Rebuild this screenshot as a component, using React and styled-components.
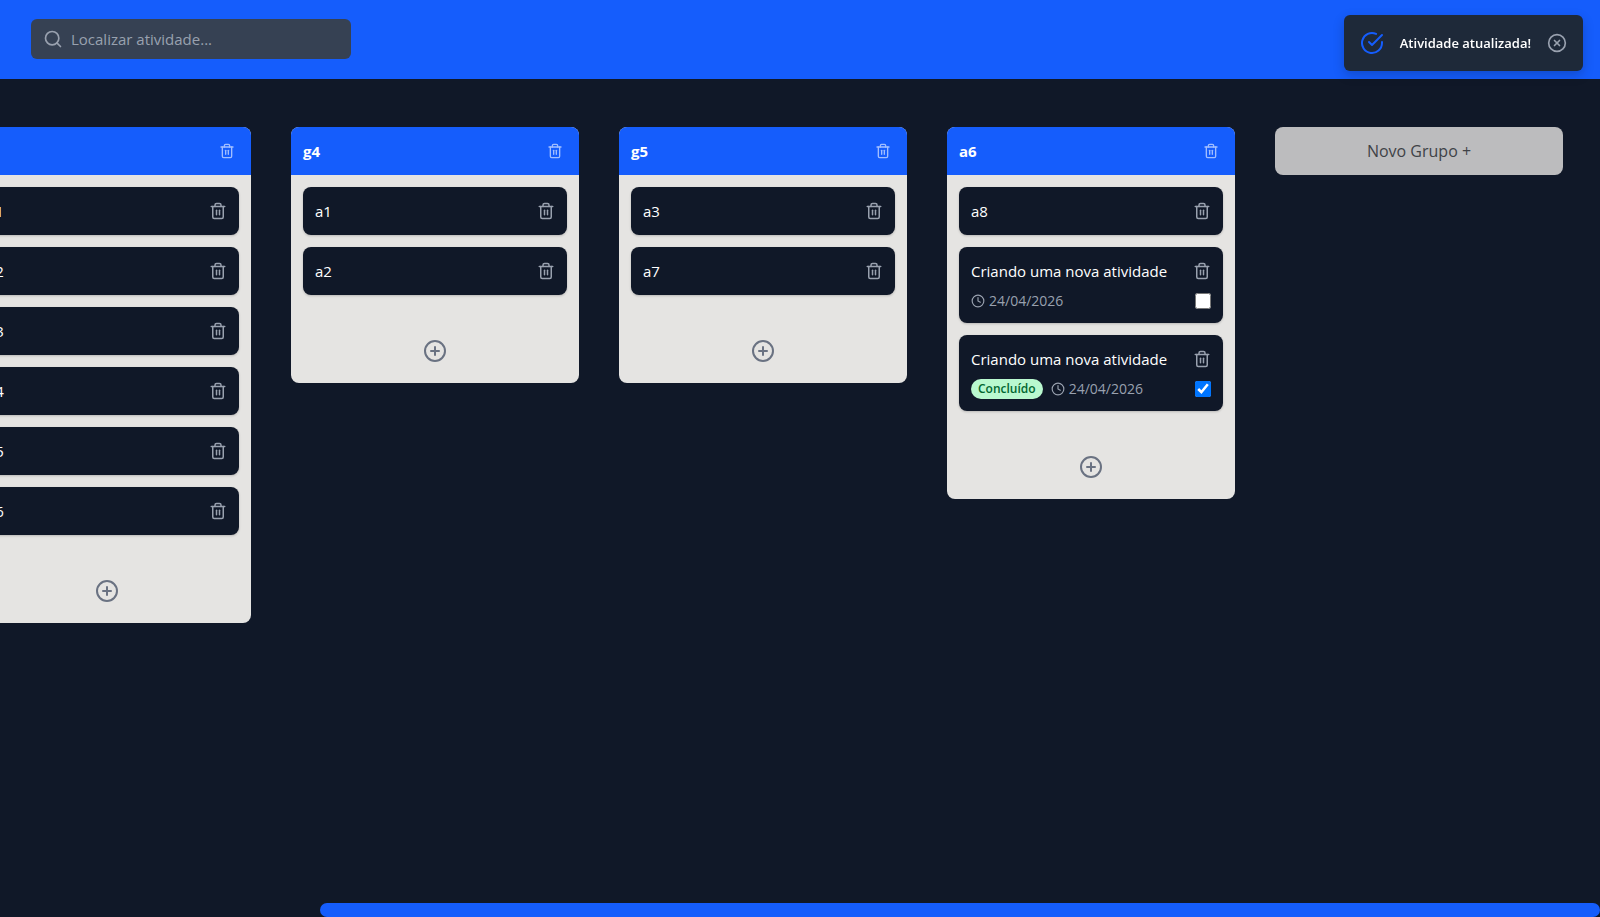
import React, { useState } from "react";
import styled, { createGlobalStyle } from "styled-components";
import { FiSearch, FiCheckCircle, FiXCircle, FiPlusCircle, FiClock, FiTrash2 } from "react-icons/fi";

const blue = "#155dfc";
const navy = "#101828";

const GlobalStyle = createGlobalStyle`
  *, *::before, *::after { box-sizing: border-box; }
  body {
    margin: 0;
    background: ${navy};
    color: #fff;
    font: 16px/24px "Segoe UI", "Open Sans", "Noto Sans", sans-serif;
    overflow: hidden;
  }
  button, input { font: inherit; color: inherit; }
  button { border: 0; padding: 0; background: none; cursor: pointer; }
  h2, p, ul { margin: 0; padding: 0; }
`;

const Page = styled.div`
  min-height: 100vh;
  display: flex;
  flex-direction: column;
`;

const TopBar = styled.header`
  background: ${blue};
  padding: 19px 31px 20px;
`;

const SearchBox = styled.label`
  display: flex;
  align-items: center;
  gap: 8px;
  width: 320px;
  height: 40px;
  padding: 0 12px;
  border-radius: 6px;
  background: #364153;
  color: #99a1af;
`;

const SearchInput = styled.input`
  flex: 1;
  min-width: 0;
  padding: 0;
  border: 0;
  outline: 0;
  background: none;
  font-size: 15px;
  &::placeholder { color: #99a1af; opacity: 1; }
`;

const Board = styled.main`
  flex: 1;
  display: flex;
  justify-content: flex-end;
  align-items: flex-start;
  gap: 40px;
  padding: 48px 37px 48px 0;
  overflow: hidden;
`;

const Column = styled.section`
  flex: none;
  width: 288px;
  border-radius: 8px;
  overflow: hidden;
  background: #e5e4e2;
`;

const ColumnHeader = styled.div`
  display: flex;
  align-items: center;
  justify-content: space-between;
  height: 48px;
  padding: 0 16px 0 12px;
  background: ${blue};
`;

const ColumnTitle = styled.h2`
  font-size: 15px;
  line-height: 24px;
  font-weight: 700;
`;

const IconButton = styled.button`
  display: flex;
  color: ${(p) => p.$color || "#99a1af"};
`;

const CardList = styled.ul`
  list-style: none;
  display: flex;
  flex-direction: column;
  gap: 12px;
  padding: 12px;
`;

const Card = styled.li`
  display: flex;
  flex-direction: column;
  gap: 8px;
  padding: 12px;
  border-radius: 8px;
  background: ${navy};
  box-shadow: 0 1px 3px rgba(0, 0, 0, 0.1), 0 1px 2px rgba(0, 0, 0, 0.1);
`;

const CardRow = styled.div`
  display: flex;
  align-items: center;
  justify-content: space-between;
`;

const CardTitle = styled.p`
  font-size: 15px;
  line-height: 24px;
`;

const Meta = styled.div`
  display: flex;
  align-items: center;
  gap: 8px;
`;

const Badge = styled.span`
  padding: 0 7px;
  border-radius: 10px;
  background: #b9f8cf;
  color: #016630;
  font-size: 12px;
  line-height: 20px;
  font-weight: 600;
`;

const DueDate = styled.span`
  display: flex;
  align-items: center;
  gap: 4px;
  color: #99a1af;
  font-size: 14px;
  line-height: 20px;
`;

const DoneBox = styled.input`
  width: 16px;
  height: 16px;
  margin: 0;
  accent-color: #0075ff;
`;

const AddRow = styled.div`
  display: flex;
  justify-content: center;
  padding: 32px 0 20px;
`;

const NewGroup = styled.button`
  flex: none;
  width: 288px;
  height: 48px;
  border-radius: 8px;
  background: #bcbcbe;
  color: #3f4247;
  font-size: 16px;
`;

const Toast = styled.div`
  position: fixed;
  top: 15px;
  right: 17px;
  display: flex;
  align-items: center;
  gap: 16px;
  height: 56px;
  padding: 0 16px;
  border-radius: 6px;
  background: #1e2939;
  box-shadow: 0 4px 12px rgba(0, 0, 0, 0.2);
  font-size: 13px;
  font-weight: 600;
`;

const ScrollTrack = styled.div`
  display: flex;
  justify-content: flex-end;
`;

const ScrollThumb = styled.div`
  width: 80%;
  height: 14px;
  border-radius: 7px;
  background: ${blue};
`;

const columns = [
  { title: "g3", cards: ["a1", "a2", "a3", "a4", "a5", "a6"].map((title) => ({ title })) },
  { title: "g4", cards: [{ title: "a1" }, { title: "a2" }] },
  { title: "g5", cards: [{ title: "a3" }, { title: "a7" }] },
  {
    title: "a6",
    cards: [
      { title: "a8" },
      { title: "Criando uma nova atividade", due: "24/04/2026" },
      { title: "Criando uma nova atividade", due: "24/04/2026", done: true },
    ],
  },
];

function Activity({ title, due, done: initial = false }) {
  const [done, setDone] = useState(initial);
  return (
    <Card>
      <CardRow>
        <CardTitle>{title}</CardTitle>
        <IconButton aria-label={`Excluir ${title}`}><FiTrash2 size={18} /></IconButton>
      </CardRow>
      {due && (
        <CardRow>
          <Meta>
            {done && <Badge>Concluído</Badge>}
            <DueDate><FiClock size={14} />{due}</DueDate>
          </Meta>
          <DoneBox
            type="checkbox"
            aria-label={`Concluir ${title}`}
            checked={done}
            onChange={(e) => setDone(e.target.checked)}
          />
        </CardRow>
      )}
    </Card>
  );
}

export default function App() {
  const [toast, setToast] = useState(true);
  return (
    <Page>
      <GlobalStyle />
      <TopBar>
        <SearchBox>
          <FiSearch size={20} />
          <SearchInput type="text" aria-label="Localizar atividade" placeholder="Localizar atividade..." />
        </SearchBox>
      </TopBar>
      <Board>
        {columns.map((column) => (
          <Column key={column.title}>
            <ColumnHeader>
              <ColumnTitle>{column.title}</ColumnTitle>
              <IconButton $color="#a1beff" aria-label={`Excluir grupo ${column.title}`}><FiTrash2 size={16} /></IconButton>
            </ColumnHeader>
            <CardList>
              {column.cards.map((card, i) => <Activity key={i} {...card} />)}
            </CardList>
            <AddRow>
              <IconButton $color="#6a7282" aria-label="Adicionar atividade"><FiPlusCircle size={24} /></IconButton>
            </AddRow>
          </Column>
        ))}
        <NewGroup>Novo Grupo +</NewGroup>
      </Board>
      <ScrollTrack><ScrollThumb /></ScrollTrack>
      {toast && (
        <Toast role="status">
          <FiCheckCircle size={24} color={blue} />
          Atividade atualizada!
          <IconButton aria-label="Fechar" onClick={() => setToast(false)}><FiXCircle size={20} /></IconButton>
        </Toast>
      )}
    </Page>
  );
}
